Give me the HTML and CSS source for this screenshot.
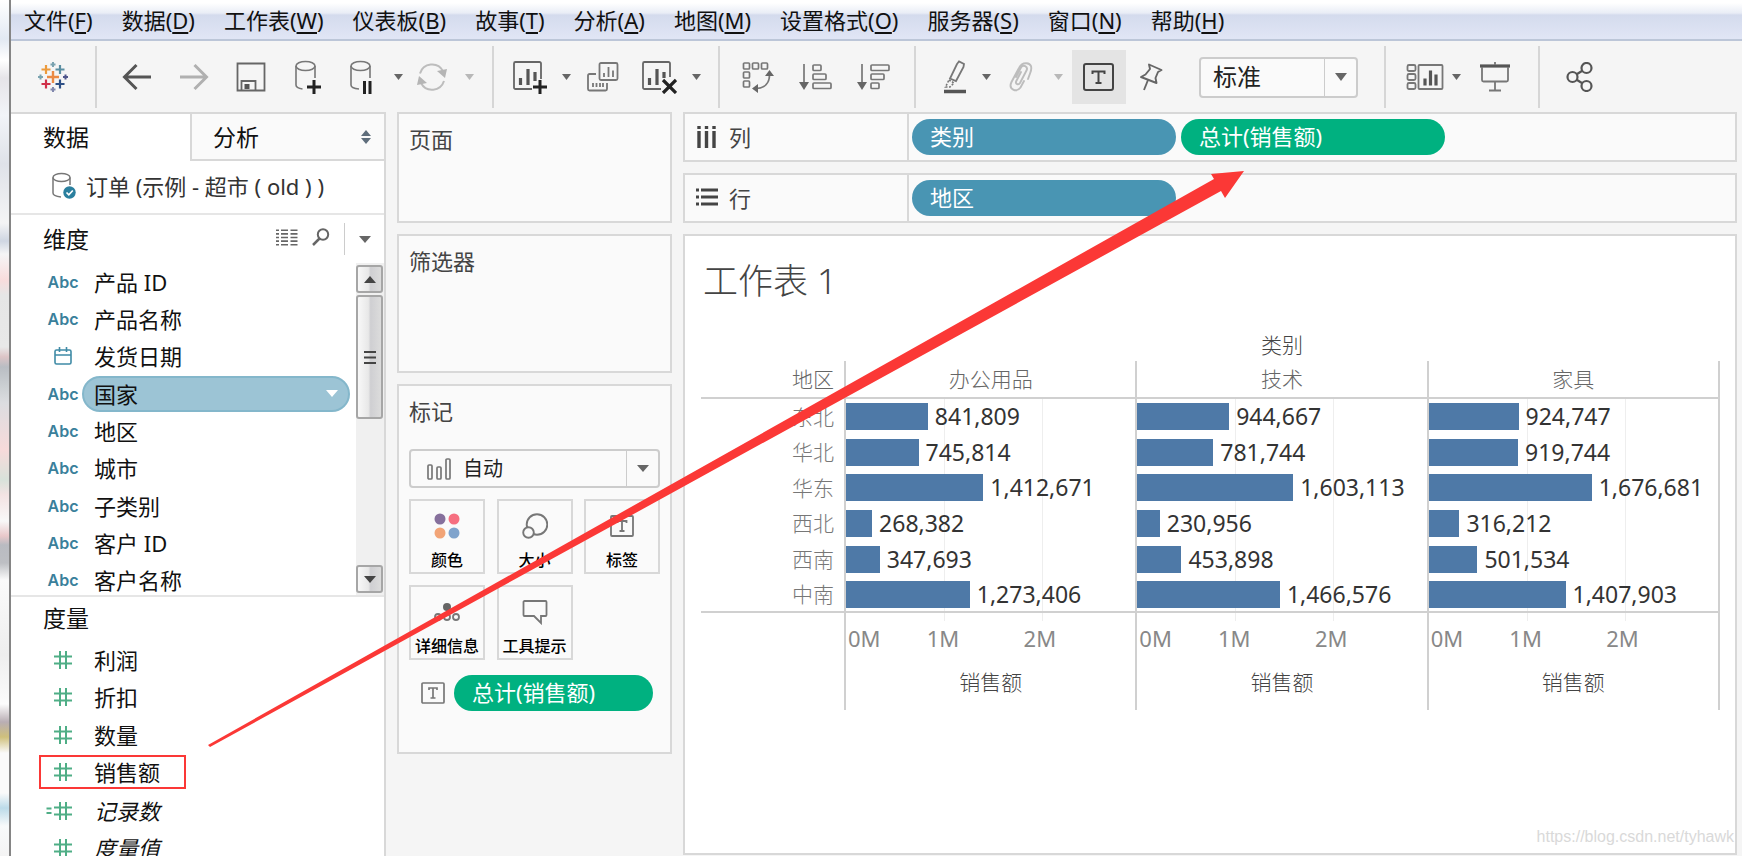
FILE: index.html
```html
<!DOCTYPE html>
<html lang="zh-CN">
<head>
<meta charset="utf-8">
<title>工作表 1</title>
<link rel="stylesheet" href="styles.css">
</head>
<body>
<div class="backdrop"></div>
<div class="app">
  <nav class="menubar">
    <button>文件(<u>F</u>)</button>
    <button>数据(<u>D</u>)</button>
    <button>工作表(<u>W</u>)</button>
    <button>仪表板(<u>B</u>)</button>
    <button>故事(<u>T</u>)</button>
    <button>分析(<u>A</u>)</button>
    <button>地图(<u>M</u>)</button>
    <button>设置格式(<u>O</u>)</button>
    <button>服务器(<u>S</u>)</button>
    <button>窗口(<u>N</u>)</button>
    <button>帮助(<u>H</u>)</button>
  </nav>

  <div class="toolbar" role="toolbar" aria-label="工具栏">
    <div class="group group-logo">
      <button class="tool w84" aria-label="开始页面">
        <svg width="32" height="32" viewBox="0 0 32 32" fill="none">
          <path d="M16 10v12M10 16h12" stroke="#eb8a44" stroke-width="2.400"/>
          <path d="M9 4v9M4.500 8.500h9" stroke="#ec9a3c" stroke-width="2.200"/>
          <path d="M23 4v9M18.500 8.500h9" stroke="#5b8fa3" stroke-width="2.200"/>
          <path d="M9 18.500v9M4.500 23h9" stroke="#d0304a" stroke-width="2.200"/>
          <path d="M23 18.500v9M18.500 23h9" stroke="#2d4f86" stroke-width="2.200"/>
          <path d="M16 1v5M13.500 3.500h5M3.500 13.500v5M1 16h5" stroke="#7ba3b0" stroke-width="2"/>
          <path d="M28.500 13.500v5M26 16h5" stroke="#50568c" stroke-width="2"/>
          <path d="M16 26v5M13.500 28.500h5" stroke="#8289ae" stroke-width="2"/>
        </svg>
      </button>
    </div>

    <div class="group group-history">
      <button class="tool w57" aria-label="撤消">
        <svg width="30" height="28" viewBox="0 0 30 28" fill="none" stroke="#555" stroke-width="3"><path d="M29 14H3M14.500 2L2.500 14l12 12"/></svg>
      </button>
      <button class="tool w57" aria-label="重做">
        <svg width="30" height="28" viewBox="0 0 30 28" fill="none" stroke="#b0b0b0" stroke-width="3"><path d="M1 14h26M15.500 2l12 12-12 12"/></svg>
      </button>
      <button class="tool w57" aria-label="保存">
        <svg width="30" height="30" viewBox="0 0 30 30" fill="none" stroke="#666" stroke-width="1.800"><path d="M1.500 1.500h27v27h-27zM5.500 28v-9h14v9"/><path d="M8.500 22h5v5h-5z" fill="#555" stroke="none"/></svg>
      </button>
      <button class="tool w57" aria-label="新建数据源">
        <svg width="28" height="34" viewBox="0 0 28 34" fill="none" stroke="#777" stroke-width="1.600"><ellipse cx="11.500" cy="6" rx="9.500" ry="4.500"/><path d="M2 6v19c0 2 3 3.500 6.500 4M21 6v12"/><path d="M20 20v14M13 27h14" stroke="#222" stroke-width="3"/></svg>
      </button>
      <button class="tool w50" aria-label="暂停自动更新">
        <svg width="24" height="34" viewBox="0 0 24 34" fill="none" stroke="#777" stroke-width="1.600"><ellipse cx="11.500" cy="6" rx="9.500" ry="4.500"/><path d="M2 6v19c0 2 3 3.500 8 4M21 6v12"/><path d="M15.500 21v13M21 21v13" stroke="#222" stroke-width="3"/></svg>
      </button>
      <button class="tool w22" aria-label="更新选项"><svg class="caret" width="9" height="6" viewBox="0 0 9 6"><path d="M0 0h9L4.500 6z"/></svg></button>
      <button class="tool w44" aria-label="运行更新">
        <svg width="32" height="28" viewBox="0 0 32 28" fill="none" stroke="#bdbdbd" stroke-width="2"><path d="M4 10.500A12.500 12.500 0 0 1 27 8M28 18A12.500 12.500 0 0 1 5 20"/><path d="M21 8l10-2-2 9zM11 20L1 22l2-9z" fill="#b5b5b5" stroke="none"/></svg>
      </button>
      <button class="tool w30" aria-label="运行选项"><svg class="caret light" width="9" height="6" viewBox="0 0 9 6"><path d="M0 0h9L4.500 6z"/></svg></button>
    </div>

    <div class="group group-sheets">
      <button class="tool w60" aria-label="新建工作表">
        <svg width="34" height="34" viewBox="0 0 34 34" fill="none" stroke="#666" stroke-width="1.800"><path d="M19 29H2.500a1.500 1.500 0 0 1-1.500-1.500v-24A1.500 1.500 0 0 1 2.500 2h24A1.500 1.500 0 0 1 28 3.500V19"/><path d="M7.500 25v-7M15 25V9M22 21v-9" stroke="#555" stroke-width="3.200"/><path d="M27 20v14M20 27h14" stroke="#222" stroke-width="3"/></svg>
      </button>
      <button class="tool w12" aria-label="新建选项"><svg class="caret" width="9" height="6" viewBox="0 0 9 6"><path d="M0 0h9L4.500 6z"/></svg></button>
      <button class="tool w62" aria-label="复制工作表">
        <svg width="32" height="30" viewBox="0 0 32 30" fill="none" stroke="#777" stroke-width="1.800"><rect x="12.500" y="1" width="18" height="17" rx="1.500"/><path d="M9 12H2.500A1.500 1.500 0 0 0 1 13.500V27a1.500 1.500 0 0 0 1.500 1.500h16A1.500 1.500 0 0 0 20 27v-6"/><path d="M17 15v-4M21.500 15V5M26 15V8.500M6 25v-4M9.500 25v-4M13 25v-4M16 25v-4"/></svg>
      </button>
      <button class="tool w50" aria-label="清除工作表">
        <svg width="35" height="34" viewBox="0 0 35 34" fill="none" stroke="#666" stroke-width="1.800"><path d="M19 29H2.500A1.500 1.500 0 0 1 1 27.500v-24A1.500 1.500 0 0 1 2.500 2h24A1.500 1.500 0 0 1 28 3.500V17"/><path d="M7.500 25v-7M15 25V9M22 18v-6" stroke="#555" stroke-width="3.200"/><path d="M21 20l13 13M34 20L21 33" stroke="#222" stroke-width="3.200"/></svg>
      </button>
      <button class="tool w22" aria-label="清除选项"><svg class="caret" width="9" height="6" viewBox="0 0 9 6"><path d="M0 0h9L4.500 6z"/></svg></button>
    </div>

    <div class="group group-sort">
      <button class="tool w58" aria-label="交换行和列">
        <svg width="32" height="32" viewBox="0 0 32 32" fill="none" stroke="#777" stroke-width="1.700"><rect x="1.500" y="2" width="6" height="6" rx="1"/><rect x="10.500" y="2" width="6" height="6" rx="1"/><rect x="19.500" y="2" width="6" height="6" rx="1"/><rect x="1.500" y="11" width="6" height="6" rx="1"/><rect x="1.500" y="20" width="6" height="6" rx="1"/><path d="M27.500 14c0 8-5 13-13 13.500"/><path d="M23 15l4.500-6 4.500 6zM16 23l-6 4.500 6 4.500z" fill="#666" stroke="none"/></svg>
      </button>
      <button class="tool w58" aria-label="升序排序">
        <svg width="34" height="28" viewBox="0 0 34 28" fill="none" stroke="#777" stroke-width="1.700"><path d="M5 1v20"/><path d="M0 19h10l-5 8z" fill="#666" stroke="none"/><rect x="14" y="2" width="8" height="5.500" rx="1"/><rect x="14" y="11" width="13" height="5.500" rx="1"/><rect x="14" y="20" width="18" height="5.500" rx="1"/></svg>
      </button>
      <button class="tool w58" aria-label="降序排序">
        <svg width="34" height="28" viewBox="0 0 34 28" fill="none" stroke="#777" stroke-width="1.700"><path d="M5 1v20"/><path d="M0 19h10l-5 8z" fill="#666" stroke="none"/><rect x="14" y="2" width="18" height="5.500" rx="1"/><rect x="14" y="11" width="13" height="5.500" rx="1"/><rect x="14" y="20" width="8" height="5.500" rx="1"/></svg>
      </button>
    </div>

    <div class="group group-marks">
      <button class="tool w50" aria-label="突出显示">
        <svg width="24" height="34" viewBox="0 0 24 34" fill="none" stroke="#777" stroke-width="1.800"><path d="M14 4l2-2.500 5 2.500-.5 3L13 21l-6-2.500z"/><path d="M6 20l5 3-4 4H2.500z" stroke-dasharray="2 1.500" stroke-width="1.600"/><path d="M1 31.500h22" stroke="#555" stroke-width="3.500"/></svg>
      </button>
      <button class="tool w12" aria-label="突出显示选项"><svg class="caret" width="9" height="6" viewBox="0 0 9 6"><path d="M0 0h9L4.500 6z"/></svg></button>
      <button class="tool w58" aria-label="分组">
        <svg width="24" height="30" viewBox="0 0 24 30" fill="none" stroke="#bdbdbd" stroke-width="1.900" stroke-linecap="round"><path d="M7 15l5-9.500c2-3.500 7.500-1 5.500 3L11 21c-1.500 2.500-5 1-3.800-1.800L12 10M19 17l2.200-6C23.500 5 22 1.500 17.500 1.200 14 1 11.500 3 10 6L2.500 20c-3.500 7.500 5 11 9 5.500L15 19"/></svg>
      </button>
      <button class="tool w16" aria-label="分组选项"><svg class="caret light" width="9" height="6" viewBox="0 0 9 6"><path d="M0 0h9L4.500 6z"/></svg></button>
      <button class="tool toggled" aria-label="显示标记标签" aria-pressed="true">
        <svg width="32" height="28" viewBox="0 0 32 28" fill="none" stroke="#444" stroke-width="2"><rect x="1" y="1" width="29" height="26" rx="2"/><path d="M9.500 11V8.500h12V11M15.500 8.500v11.500M12.500 20h6"/></svg>
      </button>
      <button class="tool w50" aria-label="固定轴">
        <svg width="24" height="28" viewBox="0 0 24 28" fill="none" stroke="#666" stroke-width="1.900" stroke-linejoin="round"><path d="M10 1.500L22.500 7l-3.500 2-2.500 6 1 5L2 14l4.500-2.500L11 6z"/><path d="M9 17L5 27"/></svg>
      </button>
      <div class="combo combo-fit">
        <select aria-label="适合"><option>标准</option></select>
        <span class="combo-arrow"><svg class="caret" width="12" height="8" viewBox="0 0 12 8"><path d="M0 0h12L6 8z"/></svg></span>
      </div>
    </div>

    <div class="group group-view">
      <button class="tool w50" aria-label="显示/隐藏功能区">
        <svg width="38" height="28" viewBox="0 0 38 28" fill="none" stroke="#777" stroke-width="1.800"><rect x="1.500" y="2" width="8" height="6" rx="1.500"/><rect x="1.500" y="11" width="8" height="6" rx="1.500"/><rect x="1.500" y="20" width="8" height="6" rx="1.500"/><rect x="12.500" y="2" width="24" height="24" rx="1"/><path d="M19 22.500v-7M24.500 22.500v-15M30 22.500v-11" stroke="#555" stroke-width="3.200"/></svg>
      </button>
      <button class="tool w12" aria-label="功能区选项"><svg class="caret" width="9" height="6" viewBox="0 0 9 6"><path d="M0 0h9L4.500 6z"/></svg></button>
      <button class="tool w66" aria-label="演示模式">
        <svg width="32" height="30" viewBox="0 0 32 30" fill="none" stroke="#777" stroke-width="1.800"><path d="M1 4h30" stroke="#555" stroke-width="3.200"/><path d="M3 5v13a1.500 1.500 0 0 0 1.500 1.500h23A1.500 1.500 0 0 0 29 18V5M16 20v9M10 28.500h12M16 0v3"/></svg>
      </button>
    </div>

    <div class="group">
      <button class="tool w58" aria-label="共享">
        <svg width="28" height="30" viewBox="0 0 28 30" fill="none" stroke="#555" stroke-width="2.200"><circle cx="6.500" cy="15" r="5"/><circle cx="20.500" cy="6" r="5"/><circle cx="20.500" cy="24" r="5"/><path d="M10.700 12.200l5.600-3.500M10.700 17.800l5.600 3.500"/></svg>
      </button>
    </div>
  </div>

  <div class="workspace">
    <aside class="data-pane">
      <div class="tabs">
        <button class="tab active">数据</button>
        <button class="tab">分析
          <svg width="10" height="14" viewBox="0 0 10 14" fill="#5f6e7c"><path d="M5 0l5 6H0zM5 14l5-6H0z"/></svg>
        </button>
      </div>
      <div class="source">
        <svg width="24" height="28" viewBox="0 0 24 28" fill="none" stroke="#777" stroke-width="1.500"><ellipse cx="9.500" cy="5.500" rx="8.500" ry="4"/><path d="M1 5.500V21c0 2 3 3.500 8 4M18 5.500V13"/><circle cx="17.500" cy="20.500" r="6.200" fill="#2a7f9e" stroke="none"/><path d="M14.500 20.500l2.300 2.300 4-4.300" stroke="#fff" stroke-width="1.700"/></svg>
        <span>订单 (示例 - 超市 ( old ) )</span>
      </div>

      <section class="dimensions">
        <header class="pane-head">
          <h2>维度</h2>
          <button class="mini" aria-label="查看数据">
            <svg width="22" height="17" viewBox="0 0 22 17" fill="none" stroke="#666" stroke-width="1.600"><path d="M0 1.300h3M5 1.300h7M14.500 1.300h7M0 4.900h3M5 4.900h7M14.500 4.900h7M0 8.500h3M5 8.500h7M14.500 8.500h7M0 12.100h3M5 12.100h7M14.500 12.100h7M0 15.700h3M5 15.700h7M14.500 15.700h7"/></svg>
          </button>
          <button class="mini" aria-label="查找字段">
            <svg width="18" height="18" viewBox="0 0 18 18" fill="none" stroke="#666" stroke-width="2"><circle cx="11" cy="6.500" r="5.200"/><path d="M7.500 10.500L1 17" stroke-width="2.500"/></svg>
          </button>
          <button class="mini mini-menu" aria-label="维度菜单"><svg class="caret" width="12" height="7" viewBox="0 0 12 7"><path d="M0 0h12L6 7z"/></svg></button>
        </header>
        <div class="scroll-area">
          <ul class="fields">
            <li><span class="abc">Abc</span><span class="name">产品 ID</span></li>
            <li><span class="abc">Abc</span><span class="name">产品名称</span></li>
            <li><svg width="18" height="18" viewBox="0 0 18 18" fill="none" stroke="#3f8ba6" stroke-width="1.600"><rect x="1" y="3" width="16" height="14" rx="1.500"/><path d="M1 8h16M5.500 0v5M12.500 0v5"/></svg><span class="name">发货日期</span></li>
            <li><span class="abc">Abc</span><span class="name selected">国家 <svg width="12" height="7" viewBox="0 0 12 7" fill="#fff"><path d="M0 0h12L6 7z"/></svg></span></li>
            <li><span class="abc">Abc</span><span class="name">地区</span></li>
            <li><span class="abc">Abc</span><span class="name">城市</span></li>
            <li><span class="abc">Abc</span><span class="name">子类别</span></li>
            <li><span class="abc">Abc</span><span class="name">客户 ID</span></li>
            <li><span class="abc">Abc</span><span class="name">客户名称</span></li>
          </ul>
          <div class="scrollbar">
            <button class="scroll-btn" aria-label="向上滚动"><svg width="12" height="7" viewBox="0 0 12 7"><path d="M0 7h12L6 0z" fill="#444"/></svg></button>
            <div class="thumb"><svg width="12" height="15" viewBox="0 0 12 15" stroke="#444" stroke-width="1.800"><path d="M0 2h12M0 7.500h12M0 13h12"/></svg></div>
            <button class="scroll-btn scroll-down" aria-label="向下滚动"><svg width="12" height="7" viewBox="0 0 12 7"><path d="M0 0h12L6 7z" fill="#444"/></svg></button>
          </div>
        </div>
      </section>

      <section class="measures">
        <header class="pane-head"><h2>度量</h2></header>
        <ul class="fields">
          <li><svg class="hash" width="18" height="18" viewBox="0 0 18 18"><path d="M6 0v18M12 0v18M0 5.500h18M0 12.500h18"/></svg><span class="name">利润</span></li>
          <li><svg class="hash" width="18" height="18" viewBox="0 0 18 18"><path d="M6 0v18M12 0v18M0 5.500h18M0 12.500h18"/></svg><span class="name">折扣</span></li>
          <li><svg class="hash" width="18" height="18" viewBox="0 0 18 18"><path d="M6 0v18M12 0v18M0 5.500h18M0 12.500h18"/></svg><span class="name">数量</span></li>
          <li class="marked"><svg class="hash" width="18" height="18" viewBox="0 0 18 18"><path d="M6 0v18M12 0v18M0 5.500h18M0 12.500h18"/></svg><span class="name">销售额</span></li>
          <li class="calc"><svg class="hash" width="34" height="18" viewBox="-8 0 34 18"><path d="M6 0v18M12 0v18M0 5.500h18M0 12.500h18M-7.500 6.500h5M-7.500 11h5"/></svg><span class="name">记录数</span></li>
          <li class="calc"><svg class="hash" width="18" height="18" viewBox="0 0 18 18"><path d="M6 0v18M12 0v18M0 5.500h18M0 12.500h18"/></svg><span class="name">度量值</span></li>
        </ul>
      </section>
    </aside>

    <div class="cards">
      <section class="card card-pages"><h3>页面</h3></section>
      <section class="card card-filters"><h3>筛选器</h3></section>
      <section class="card card-marks">
        <h3>标记</h3>
        <div class="combo combo-mark">
          <svg width="24" height="22" viewBox="0 0 24 22" fill="none" stroke="#777" stroke-width="1.700"><rect x="1" y="7" width="4" height="14" rx="1"/><rect x="10" y="9" width="4" height="12" rx="1"/><rect x="19" y="1" width="4" height="20" rx="1"/></svg>
          <select aria-label="标记类型"><option>自动</option></select>
          <span class="combo-arrow"><svg class="caret" width="12" height="7" viewBox="0 0 12 7"><path d="M0 0h12L6 7z"/></svg></span>
        </div>
        <div class="mark-grid">
          <button><svg width="26" height="26" viewBox="0 0 26 26"><circle cx="6" cy="6" r="5.500" fill="#86709c"/><circle cx="20" cy="6" r="5.500" fill="#f66f80"/><circle cx="6" cy="20" r="5.500" fill="#f2a477"/><circle cx="20" cy="20" r="5.500" fill="#7fa3cc"/></svg>颜色</button>
          <button><svg width="26" height="26" viewBox="0 0 26 26" fill="#fafafa" stroke="#777" stroke-width="1.900"><circle cx="15" cy="11.500" r="10.300"/><circle cx="6.500" cy="19.500" r="5.300"/></svg>大小</button>
          <button><svg width="26" height="26" viewBox="0 0 26 26" fill="none" stroke="#777" stroke-width="1.800"><rect x="2" y="3" width="22" height="20" rx="1"/><path d="M8.500 10V8h9v2M13 8v10M10.500 18h5"/></svg>标签</button>
          <button><svg width="26" height="26" viewBox="0 0 26 26" fill="none" stroke="#777" stroke-width="1.800"><circle cx="13" cy="8" r="4" fill="#666" stroke="none"/><circle cx="4" cy="18" r="3"/><circle cx="13" cy="18" r="3"/><circle cx="22" cy="18" r="3"/></svg>详细信息</button>
          <button><svg width="26" height="26" viewBox="0 0 26 26" fill="none" stroke="#777" stroke-width="1.800"><path d="M2.500 2h21a1 1 0 0 1 1 1v13a1 1 0 0 1-1 1H19v7l-7-7H2.500a1 1 0 0 1-1-1V3a1 1 0 0 1 1-1z"/></svg>工具提示</button>
        </div>
        <div class="mark-pill">
          <svg width="24" height="22" viewBox="0 0 24 22" fill="none" stroke="#777" stroke-width="1.700"><rect x="1" y="1" width="22" height="20" rx="1"/><path d="M8 8V6h8v2M12 6v10M9.500 16h5"/></svg>
          <span class="pill green">总计(销售额)</span>
        </div>
      </section>
    </div>

    <main class="view">
      <div class="shelf">
        <div class="shelf-name">
          <svg width="22" height="22" viewBox="0 0 22 22" stroke="#444" stroke-width="3.400"><path d="M3 0v3M3 5v17M10.500 0v3M10.500 5v17M18 0v3M18 5v17"/></svg>列
        </div>
        <div class="shelf-pills"><span class="pill blue">类别</span><span class="pill green">总计(销售额)</span></div>
      </div>
      <div class="shelf">
        <div class="shelf-name">
          <svg width="22" height="22" viewBox="0 0 22 22" stroke="#444" stroke-width="3.200"><path d="M0 3h3M5 3h17M0 10h3M5 10h17M0 17h3M5 17h17"/></svg>行
        </div>
        <div class="shelf-pills"><span class="pill blue">地区</span></div>
      </div>

      <div class="sheet">
        <h1>工作表 1</h1>
        <table class="chart">
          <thead>
            <tr class="dim"><td></td><th colspan="3" scope="colgroup">类别</th></tr>
            <tr class="cats"><th scope="col">地区</th><th scope="col">办公用品</th><th scope="col">技术</th><th scope="col">家具</th></tr>
          </thead>
          <tbody>
            <tr><th scope="row">东北</th><td><div class="bar" style="--v:.841809">841,809</div></td><td><div class="bar" style="--v:.944667">944,667</div></td><td><div class="bar" style="--v:.924747">924,747</div></td></tr>
            <tr><th scope="row">华北</th><td><div class="bar" style="--v:.745814">745,814</div></td><td><div class="bar" style="--v:.781744">781,744</div></td><td><div class="bar" style="--v:.919744">919,744</div></td></tr>
            <tr><th scope="row">华东</th><td><div class="bar" style="--v:1.412671">1,412,671</div></td><td><div class="bar" style="--v:1.603113">1,603,113</div></td><td><div class="bar" style="--v:1.676681">1,676,681</div></td></tr>
            <tr><th scope="row">西北</th><td><div class="bar" style="--v:.268382">268,382</div></td><td><div class="bar" style="--v:.230956">230,956</div></td><td><div class="bar" style="--v:.316212">316,212</div></td></tr>
            <tr><th scope="row">西南</th><td><div class="bar" style="--v:.347693">347,693</div></td><td><div class="bar" style="--v:.453898">453,898</div></td><td><div class="bar" style="--v:.501534">501,534</div></td></tr>
            <tr><th scope="row">中南</th><td><div class="bar" style="--v:1.273406">1,273,406</div></td><td><div class="bar" style="--v:1.466576">1,466,576</div></td><td><div class="bar" style="--v:1.407903">1,407,903</div></td></tr>
          </tbody>
          <tfoot>
            <tr>
              <td></td>
              <td><div class="axis"><span>0M</span><span>1M</span><span>2M</span></div><div class="axis-title">销售额</div></td>
              <td><div class="axis"><span>0M</span><span>1M</span><span>2M</span></div><div class="axis-title">销售额</div></td>
              <td><div class="axis"><span>0M</span><span>1M</span><span>2M</span></div><div class="axis-title">销售额</div></td>
            </tr>
          </tfoot>
        </table>
        <div class="watermark">https://blog.csdn.net/tyhawk</div>
      </div>
    </main>
  </div>
</div>
<svg class="arrow" width="1260" height="760" viewBox="0 0 1260 760" fill="#fb3836"><path d="M208 745L1214 179l-3-5 33-3-19 27-4-7L210 747z"/></svg>
</body>
</html>
```
FILE: styles.css
```css
* { box-sizing: border-box; }

body {
  margin: 0;
  height: 100vh;
  overflow: hidden;
  position: relative;
  display: flex;
  background: #f5f5f5;
  color: #222;
  font: 22px/32px "Noto Sans", "Noto Sans CJK SC", sans-serif;
}

button, select {
  font: inherit;
  color: inherit;
  background: none;
  border: 0;
  padding: 0;
  margin: 0;
}

h1, h2, h3, ul { margin: 0; padding: 0; font-weight: 400; }
ul { list-style: none; }
svg { display: block; flex: none; }

.backdrop {
  flex: none;
  width: 9px;
  background: linear-gradient(#fff 0, #e2e9f3 39px, #fff 60px, #e6e4e8 78px, #f2f4f8 115px, #dfe2e8 164px, #f4f4f5 223px, #cfd6e2 241px, #f5f5f6 254px, #f8dcdc 280px, #e6e6e6 295px, #e8e8e8 347px, #dcc4c6 357px, #b9bdc3 367px, #ccd0d3 387px, #dcdde0 403px, #f7dada 450px, #d8e2da 480px, #f3e3e3 495px, #f8f8f8 521px, #e9c8ca 536px, #b9bbc1 545px, #bdbfc3 563px, #fafafa 580px, #eee 655px, #fcfcfc 704px, #b9aeb4 722px, #cfc07c 737px, #fafafa 753px, #fafafa 793px, #bcdbe9 808px, #f8fafb 826px, #f4f4f4 100%);
}

.app {
  flex: 1;
  min-width: 0;
  display: flex;
  flex-direction: column;
  border-left: 2px solid #858585;
}

/* Menu */
.menubar {
  flex: none;
  display: flex;
  gap: 29px;
  height: 41px;
  padding: 4px 13px 0;
  border-bottom: 2px solid #bcc6d8;
  background: linear-gradient(#fff 3px, #e9edf6 13px, #d4dbed 15px, #e0e5f5 38px);
  color: #111;
}
.menubar button { height: 32px; white-space: nowrap; }
.menubar u { text-underline-offset: 3px; }

/* Toolbar */
.toolbar {
  flex: none;
  display: flex;
  height: 71px;
  padding: 5px 0 4px;
}
.group {
  display: flex;
  align-items: center;
  border-right: 2px solid #d6d6d6;
}
.group:last-child { border-right: 0; padding-left: 11px; }
.group-history { padding: 0 8px 0 11px; }
.group-sheets { padding: 0 10px 0 6px; }
.group-sort { padding: 0 11px 0 9px; }
.group-marks { padding: 0 26px 0 14px; }
.group-view { padding: 0 10px 0 14px; }
.tool { display: flex; align-items: center; justify-content: center; height: 54px; }
.w12 { width: 12px; }
.w16 { width: 16px; }
.w22 { width: 24px; }
.w30 { width: 30px; }
.w44 { width: 44px; }
.w50 { width: 50px; }
.w57 { width: 57px; }
.w58 { width: 58px; }
.w60 { width: 60px; }
.w62 { width: 62px; }
.w66 { width: 66px; }
.w84 { width: 84px; }
.toggled { width: 54px; margin-left: 6px; background: #e4e4e4; }
.caret { fill: #666; }
.caret.light { fill: #b8b8b8; }

.combo {
  display: flex;
  align-items: center;
  border: 2px solid #ccc;
  border-radius: 4px;
  background: #fafafa;
}
.combo select { flex: 1; min-width: 0; height: 100%; appearance: none; }
.combo-arrow {
  display: flex;
  align-items: center;
  justify-content: center;
  align-self: stretch;
  width: 32px;
  border-left: 1px solid #ccc;
}
.combo-fit { width: 159px; height: 41px; margin-left: 23px; padding-left: 12px; font-size: 24px; }
.combo-mark { height: 39px; margin-bottom: 11px; padding-left: 16px; gap: 12px; font-size: 20px; }

/* Workspace */
.workspace { flex: 1; min-height: 0; display: flex; gap: 11px; padding-right: 5px; }

.data-pane {
  flex: none;
  width: 375px;
  display: flex;
  flex-direction: column;
  background: #fff;
  border: solid #d8d8d8;
  border-width: 2px 2px 0 0;
  overflow: hidden;
  color: #111;
}
.tabs { flex: none; display: flex; height: 47px; font-size: 23px; }
.tab { width: 179px; padding: 0 0 2px 32px; text-align: left; }
.tab:not(.active) {
  flex: 1;
  display: flex;
  align-items: center;
  justify-content: space-between;
  padding: 0 13px 0 21px;
  background: #fafafa;
  border: solid #d8d8d8;
  border-width: 0 0 2px 2px;
}
.source {
  flex: none;
  display: flex;
  align-items: center;
  gap: 10px;
  height: 54px;
  padding: 0 0 2px 41px;
  border-bottom: 2px solid #e6e6e6;
  color: #333;
  white-space: pre;
}
.pane-head { display: flex; align-items: center; height: 48px; padding-left: 32px; }
.pane-head h2 { flex: 1; font-size: 23px; }
.mini { display: flex; align-items: center; height: 32px; margin-right: 14px; margin-bottom: 4px; }
.mini-menu { width: 40px; margin: 0; justify-content: center; border-left: 1px solid #ccc; }
.dimensions { flex: none; border-bottom: 2px solid #e6e6e6; }
.scroll-area { display: flex; height: 332px; }
.dimensions .fields { flex: 1; height: 336px; display: flex; flex-direction: column; }
.dimensions li { flex: 1; }
.fields li { display: flex; align-items: center; padding-left: 34px; }
.fields li > svg, .abc { width: 36px; flex: none; }
.abc { font: 600 16px/24px Inter, "Open Sans", sans-serif; color: #3a809b; text-align: center; }
.name { margin-left: 3px; padding: 0 10px; }
.selected {
  flex: 1;
  display: flex;
  align-items: center;
  justify-content: space-between;
  height: 36px;
  margin-left: 1px;
  margin-right: 6px;
  border: 2px solid #84b7cb;
  border-radius: 18px;
  background: #9cc4d5;
}
.hash { fill: none; stroke: #4fae86; stroke-width: 2; }
.scrollbar { flex: none; width: 28px; display: flex; flex-direction: column; background: #f0f0f0; gap: 2px; padding: 2px 0; }
.scroll-btn, .thumb {
  width: 27px;
  display: flex;
  align-items: center;
  justify-content: center;
  border: 2px solid #a6a6a6;
  border-radius: 3px;
  background: linear-gradient(90deg, #f8f8f8, #e8e8e8 45%, #cfcfd2 55%, #dcdcdc);
}
.scroll-btn { height: 28px; }
.thumb { height: 124px; }
.scroll-down { margin-top: auto; }

.measures .pane-head { height: 42px; }
.measures .fields { display: flex; flex-direction: column; height: 228px; padding-top: 2px; }
.measures li { flex: 1; }
.measures li.marked {
  flex: none;
  width: 147px;
  height: 34px;
  margin: 1px 0 3px 28px;
  padding-left: 4px;
  border: 2px solid #fb3836;
}
.calc { font-style: italic; }

/* Cards */
.cards { flex: none; width: 275px; display: flex; flex-direction: column; gap: 11px; }
.card { border: 2px solid #d8d8d8; background: #fafafa; padding: 9px 10px; }
.card h3 { font-size: 22px; line-height: 32px; color: #444; }
.card-pages { height: 111px; }
.card-filters { height: 139px; }
.card-marks { height: 370px; }
.card-marks h3 { margin-bottom: 22px; }
.mark-grid { display: grid; grid-template-columns: repeat(3, 76px); justify-content: space-between; gap: 11px; }
.mark-grid button {
  display: flex;
  flex-direction: column;
  align-items: center;
  justify-content: space-between;
  height: 75px;
  padding: 12px 0 0;
  border: 2px solid #d8d8d8;
  font-size: 16px;
  line-height: 24px;
  font-weight: 500;
  color: #000;
  white-space: nowrap;
}
.mark-pill { display: flex; align-items: center; gap: 9px; margin-top: 15px; padding: 0 7px 0 12px; }

.pill { height: 36px; padding-left: 18px; border-radius: 18px; color: #fff; line-height: 34px; white-space: nowrap; }
.blue { background: #4995b3; }
.green { background: #00b180; }
.mark-pill .pill { flex: 1; }

/* View */
.view { flex: 1; min-width: 0; display: flex; flex-direction: column; gap: 11px; padding-bottom: 1px; }
.shelf { flex: none; display: flex; height: 50px; border: 2px solid #d8d8d8; background: #fafafa; }
.shelf-name { display: flex; align-items: center; gap: 11px; width: 224px; padding-left: 11px; border-right: 2px solid #d8d8d8; color: #444; }
.shelf-pills { display: flex; align-items: center; gap: 5px; padding-left: 3px; }
.shelf .pill { width: 264px; }

.sheet {
  flex: 1;
  min-height: 0;
  position: relative;
  padding: 24px 15px 0 16px;
  border: 2px solid #d8d8d8;
  background: #fff;
  font-size: 21px;
}
.sheet h1 { padding-left: 2px; font-size: 35px; line-height: 42px; font-weight: 300; color: #444; }

.chart { width: 100%; margin-top: 27px; border-collapse: collapse; table-layout: fixed; }
.chart th, .chart td { padding: 0; font-weight: 300; }
.chart tr > :first-child { width: 144px; text-align: right; padding-right: 10px; }
.chart tr > :not(:first-child) { border: solid #d0d0d0; border-width: 0 2px; }
.chart .dim > th:not(:first-child) { border: 0; height: 32px; color: #444; }
.cats th { height: 37px; color: #666; border-bottom: 2px solid #d0d0d0 !important; }
.chart tbody th { color: #777; }
.chart tbody tr { height: 36px; }
.chart tbody tr:nth-child(3n) { height: 35px; }
.chart tbody td, .axis::before {
  background: linear-gradient(#eee, #eee) 34% 0 / 1px 100% no-repeat, linear-gradient(#eee, #eee) 68% 0 / 1px 100% no-repeat;
}
.bar { display: flex; align-items: center; gap: 7px; height: 27px; font-size: 23px; line-height: 27px; font-weight: 400; color: #333; }
.bar::before { content: ""; height: 27px; width: calc(var(--v) * 33.6%); background: #4e79a7; }
.chart tfoot tr > * { border-top: 2px solid #d0d0d0 !important; vertical-align: top; }
.axis { position: relative; display: grid; grid-template-columns: 17% 33% 34%; padding-top: 9px; font-size: 22px; font-weight: 400; color: #888; text-align: center; }
.axis span:first-child { text-align: left; padding-left: 2px; }
.axis::before { content: ""; position: absolute; top: 0; left: 0; width: 100%; height: 8px; }
.axis-title { height: 56px; padding-top: 12px; text-align: center; color: #444; }

.watermark { position: absolute; right: 1px; bottom: 3px; font: 16px/26px "Liberation Sans", Arial, sans-serif; color: #d9d9d9; }

.arrow { position: absolute; left: 0; top: 0; pointer-events: none; }
```
